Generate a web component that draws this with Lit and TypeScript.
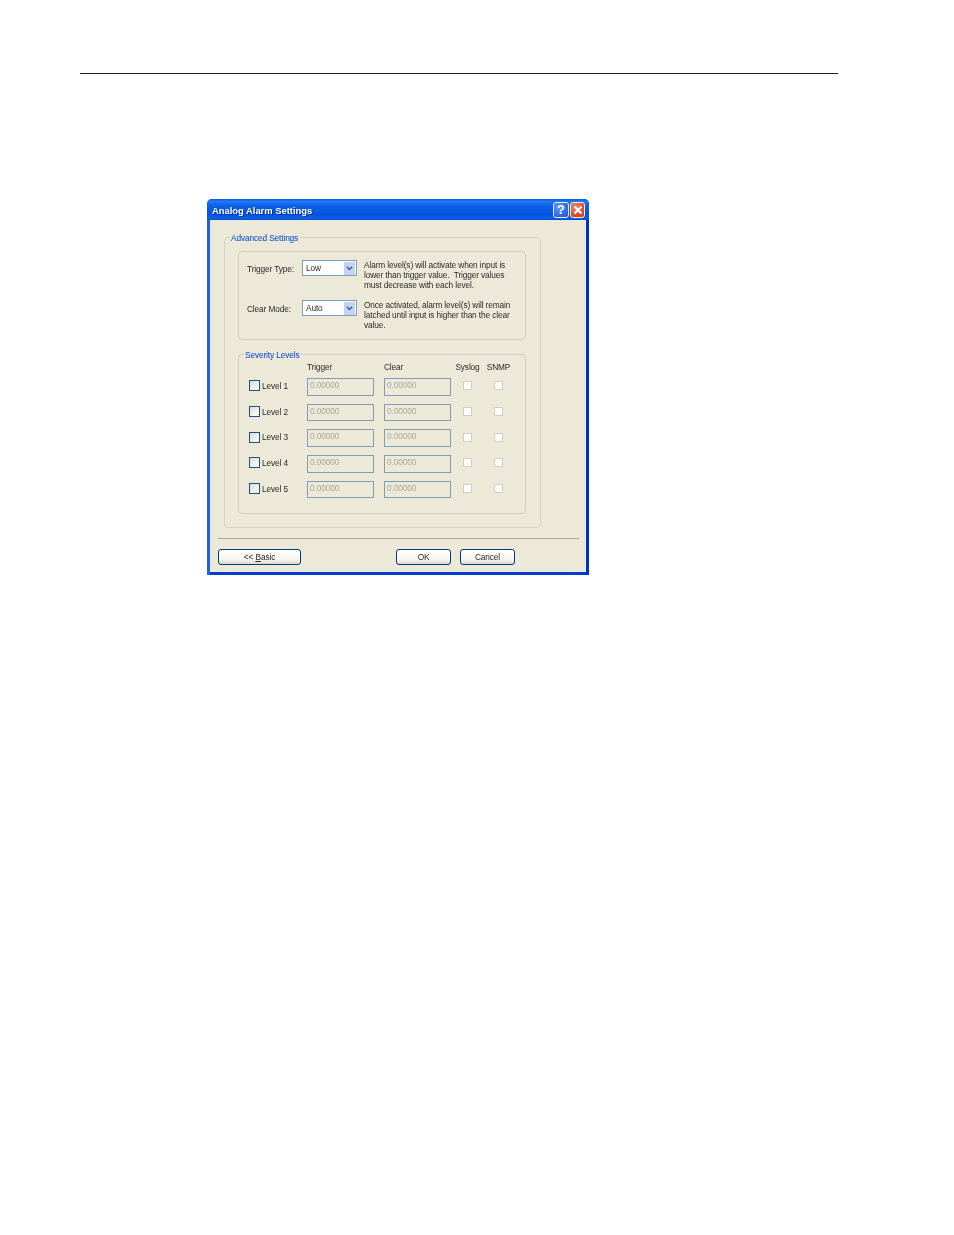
import { LitElement, html, css } from "lit";
import { customElement } from "lit/decorators.js";

const LEVELS = [1, 2, 3, 4, 5];

@customElement("app-root")
export class AppRoot extends LitElement {
  static styles = css`
    :host { display: block; width: 954px; height: 1235px; background: #fff; overflow: hidden;
      font-family: "Liberation Sans", Arial, sans-serif; font-size: 8.3px; letter-spacing: -0.12px; color: #2a2a2a; }
    .page { padding: 73px 0 0 80px; }
    .rule { width: 758px; height: 1px; background: #222; }
    .dialog { margin: 125px 0 0 127px; width: 382px; height: 376px; box-sizing: border-box;
      display: flex; flex-direction: column; border-radius: 5px 5px 0 0; overflow: hidden;
      background: linear-gradient(90deg, #1f62ea 0 50%, #0033c8 50%); filter: blur(0.2px); }
    .title { height: 21px; flex: none; display: flex; align-items: center; padding: 0 4px 0 5px; gap: 1px;
      background: linear-gradient(#0a5ae6 0%, #1f78f5 12%, #0b5fe6 35%, #0553dc 75%, #0a62ea 92%, #0444c4 100%); }
    .title-text { flex: 1; padding-top: 2px; color: #fff; font: bold 9.4px "Liberation Sans", Arial, sans-serif; letter-spacing: 0;
      text-shadow: 1px 1px 0 #0a2f9e; }
    .wb { height: 16px; box-sizing: border-box; border: 1px solid #e8eefc; border-radius: 3px;
      display: flex; align-items: center; justify-content: center; color: #fff; }
    .help { width: 16px; background: radial-gradient(circle at 35% 30%, #6c9cf5, #2a5fdc 75%); font: bold 13px "Liberation Sans", sans-serif; }
    .close { width: 15px; background: radial-gradient(circle at 35% 30%, #ec8a68, #d5431c 75%); }
    .body { flex: 1; background: #ece9d8; margin: 0 3px; border-bottom: 3px solid #0a3ad2; display: flex; flex-direction: column; }
    .outer { position: relative; margin: 17px 0 0 14px; width: 317px; height: 291px; box-sizing: border-box;
      border: 1px solid #d6d3c1; border-radius: 4px; padding: 13px 0 0 13px; }
    .legend { position: absolute; top: -5px; left: 5px; padding: 0 1px; background: #ece9d8; color: #0046d5; line-height: 10px; }
    .inner { position: relative; width: 288px; box-sizing: border-box; border: 1px solid #d0cdba; border-radius: 4px; }
    .advanced { height: 89px; padding: 8px 0 0 8px; display: grid; grid-template-columns: 55px 55px 1fr; grid-auto-rows: 40px; }
    .severity { height: 160px; margin-top: 14px; padding: 6px 0 0 10px; }
    .lbl { line-height: 16px; padding-top: 1px; }
    .combo { width: 55px; height: 16px; box-sizing: border-box; border: 1px solid #7f9db9; background: #fff;
      display: flex; align-items: center; justify-content: space-between; padding: 0 1px 0 3px; line-height: 12px; }
    .combo-btn { width: 11px; height: 13px; background: #c3d3f2; display: flex; align-items: center; justify-content: center; }
    .desc { margin: 0 0 0 7px; padding-top: 1px; line-height: 9.8px; white-space: pre; }
    .grid { display: grid; grid-template-columns: 58px 77px 71px 25px 37px; align-items: center; }
    .head { height: 11px; line-height: 10px; margin-bottom: 6px; }
    .c { justify-self: center; }
    .row { height: 17.7px; margin-bottom: 8px; }
    .lev { display: flex; align-items: center; gap: 2px; transform: translateY(-1px); }
    .cb { width: 11px; height: 11px; box-sizing: border-box; border: 1px solid #1c5180; background: linear-gradient(135deg, #dcdcd7, #fff); }
    .field { width: 67px; height: 17.7px; box-sizing: border-box; border: 1px solid #7f9db9; background: #ece9d8; color: #aca899;
      padding: 1px 0 0 2px; line-height: 11px; }
    .dis { width: 9px; height: 9px; box-sizing: border-box; border: 1px solid #d2cfbe; background: #fff; transform: translateY(-1px); }
    .sep { margin: 10px 0 0 8px; width: 361px; height: 1px; background: #aca899; flex: none; }
    .btns { margin: 10px 0 0 8px; display: flex; }
    .btn { height: 16px; box-sizing: border-box; border: 1px solid #003c74; border-radius: 3px;
      background: linear-gradient(#fff, #f5f4ee 70%, #dcd8cb); display: flex; align-items: center; justify-content: center; }
    .basic { width: 83px; } .ok { width: 55px; margin-left: 95px; } .cancel { width: 55px; margin-left: 9px; }
  `;

  private combo(v: string) {
    return html`<div class="combo"><span>${v}</span><span class="combo-btn">
      <svg width="7" height="5" viewBox="0 0 7 5"><path d="M.8 .8 3.5 3.5 6.2 .8" fill="none" stroke="#3a5a9c" stroke-width="1.5"/></svg>
    </span></div>`;
  }

  render() {
    return html`<div class="page">
      <div class="rule"></div>
      <div class="dialog">
        <div class="title">
          <span class="title-text">Analog Alarm Settings</span>
          <span class="wb help">?</span>
          <span class="wb close"><svg width="10" height="10" viewBox="0 0 10 10"><path d="M1.5 1.5 8.5 8.5M8.5 1.5 1.5 8.5" stroke="#fff" stroke-width="2"/></svg></span>
        </div>
        <div class="body">
          <div class="outer">
            <span class="legend">Advanced Settings</span>
            <div class="inner advanced">
              <span class="lbl">Trigger Type:</span>
              ${this.combo("Low")}
              <div class="desc">Alarm level(s) will activate when input is
lower than trigger value.  Trigger values
must decrease with each level.</div>
              <span class="lbl">Clear Mode:</span>
              ${this.combo("Auto")}
              <div class="desc">Once activated, alarm level(s) will remain
latched until input is higher than the clear
value.</div>
            </div>
            <div class="inner severity">
              <span class="legend">Severity Levels</span>
              <div class="grid head">
                <span></span><span>Trigger</span><span>Clear</span>
                <span class="c">Syslog</span><span class="c">SNMP</span>
              </div>
              ${LEVELS.map(n => html`<div class="grid row">
                <span class="lev"><span class="cb"></span>Level ${n}</span>
                <span class="field">0.00000</span>
                <span class="field">0.00000</span>
                <span class="dis c"></span>
                <span class="dis c"></span>
              </div>`)}
            </div>
          </div>
          <div class="sep"></div>
          <div class="btns">
            <span class="btn basic">&lt;&lt;&nbsp;<u>B</u>asic</span>
            <span class="btn ok">OK</span>
            <span class="btn cancel">Cancel</span>
          </div>
        </div>
      </div>
    </div>`;
  }
}
